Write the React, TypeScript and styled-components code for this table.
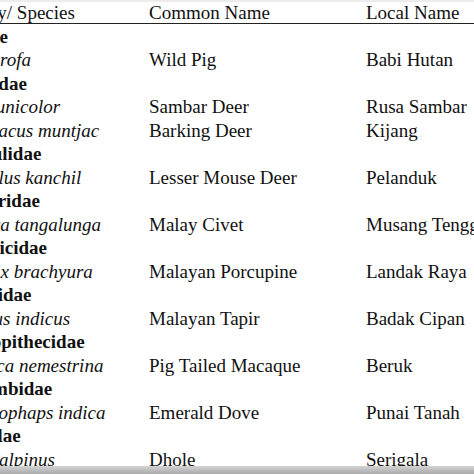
import React from 'react';
import styled, { createGlobalStyle } from 'styled-components';

const GlobalStyle = createGlobalStyle`
  html, body {
    margin: 0;
    padding: 0;
    background: #ffffff;
  }
  body {
    width: 474px;
    height: 474px;
    overflow: hidden;
  }
`;

type Row =
  | { kind: 'family'; name: string }
  | { kind: 'species'; name: string; common: string; local: string };

const rows: Row[] = [
  { kind: 'family', name: 'Suidae' },
  { kind: 'species', name: 'Sus scrofa', common: 'Wild Pig', local: 'Babi Hutan' },
  { kind: 'family', name: 'Cervidae' },
  { kind: 'species', name: 'Rusa unicolor', common: 'Sambar Deer', local: 'Rusa Sambar' },
  { kind: 'species', name: 'Muntiacus muntjac', common: 'Barking Deer', local: 'Kijang' },
  { kind: 'family', name: 'Tragulidae' },
  { kind: 'species', name: 'Tragulus kanchil', common: 'Lesser Mouse Deer', local: 'Pelanduk' },
  { kind: 'family', name: 'Viverridae' },
  { kind: 'species', name: 'Viverra tangalunga', common: 'Malay Civet', local: 'Musang Tenggalung' },
  { kind: 'family', name: 'Hystricidae' },
  { kind: 'species', name: 'Hystrix brachyura', common: 'Malayan Porcupine', local: 'Landak Raya' },
  { kind: 'family', name: 'Tapiridae' },
  { kind: 'species', name: 'Tapirus indicus', common: 'Malayan Tapir', local: 'Badak Cipan' },
  { kind: 'family', name: 'Cercopithecidae' },
  { kind: 'species', name: 'Macaca nemestrina', common: 'Pig Tailed Macaque', local: 'Beruk' },
  { kind: 'family', name: 'Columbidae' },
  { kind: 'species', name: 'Chalcophaps indica', common: 'Emerald Dove', local: 'Punai Tanah' },
  { kind: 'family', name: 'Canidae' },
  { kind: 'species', name: 'Cuon alpinus', common: 'Dhole', local: 'Serigala' },
];

const Page = styled.div`
  position: relative;
  width: 474px;
  height: 474px;
  overflow: hidden;
  border-top: 2px solid #ececec;
  box-sizing: border-box;
  font-family: 'Liberation Serif', 'Times New Roman', serif;
  font-size: 19px;
  color: #111;
`;

// the table is wider than the window: its left edge lies off-screen
const Table = styled.div`
  margin-left: -47px;
  width: 580px;
  display: grid;
  grid-template-columns: 196px 217px 1fr;
  white-space: nowrap;
`;

const HeadCell = styled.div`
  line-height: 21px;
  border-bottom: 1.5px solid #222;
`;

const Cell = styled.div<{ $variant?: 'family' | 'species' }>`
  line-height: 23.5px;
  height: 23.5px;
  font-weight: ${(p) => (p.$variant === 'family' ? 700 : 400)};
  font-style: ${(p) => (p.$variant === 'species' ? 'italic' : 'normal')};
`;

const Spacer = styled.div`
  grid-column: span 3;
  height: 0.5px;
`;

const BottomEdge = styled.div`
  position: absolute;
  left: 0;
  right: 0;
  bottom: 0;
  height: 8px;
  background: linear-gradient(#d4d4d4, #a9a9a9);
`;

const App: React.FC = () => {
  return (
    <Page>
      <GlobalStyle />
      <Table>
        <HeadCell>Family/ Species</HeadCell>
        <HeadCell>Common Name</HeadCell>
        <HeadCell>Local Name</HeadCell>
        <Spacer />
        {rows.map((r, i) =>
          r.kind === 'family' ? (
            <React.Fragment key={i}>
              <Cell $variant="family">{r.name}</Cell>
              <Cell />
              <Cell />
            </React.Fragment>
          ) : (
            <React.Fragment key={i}>
              <Cell $variant="species">{r.name}</Cell>
              <Cell>{r.common}</Cell>
              <Cell>{r.local}</Cell>
            </React.Fragment>
          )
        )}
      </Table>
      <BottomEdge />
    </Page>
  );
};

export default App;
